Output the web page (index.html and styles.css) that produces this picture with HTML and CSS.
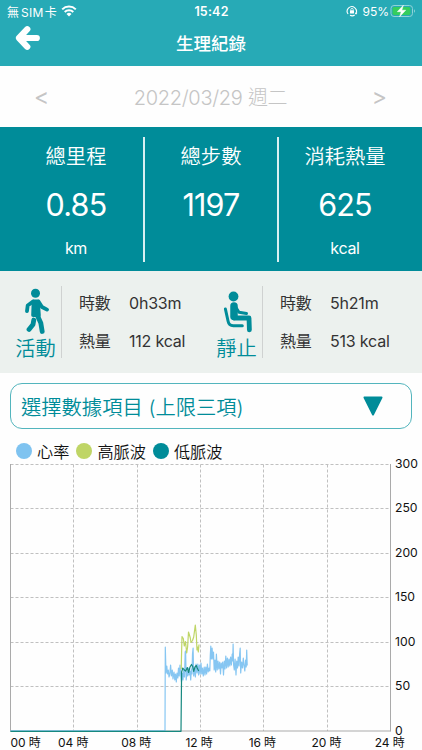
FILE: index.html
```html
<!DOCTYPE html>
<html lang="zh-Hant">
<head>
  <meta charset="UTF-8">
  <meta name="viewport" content="width=device-width, initial-scale=1.0">
  <title>生理紀錄</title>
  <link rel="stylesheet" href="styles.css">
</head>
<body>
  <header class="header">
    <div class="status-bar">
      <div class="status-left">
        <span class="carrier">無<span class="sim">SIM</span>卡</span>
        <svg class="wifi" width="16" height="12" viewBox="0 0 16 12">
          <path d="M1.2 4.4A9.7 9.7 0 0 1 14.8 4.4M3.7 7A6.2 6.2 0 0 1 12.3 7" fill="none" stroke="#fff" stroke-width="2"/>
          <path d="M5.5 8.9a3.6 3.6 0 0 1 5 0L8 11.4z" fill="#fff"/>
        </svg>
      </div>
      <div class="status-time">15:42</div>
      <div class="status-right">
        <svg width="12" height="12" viewBox="0 0 12 12">
          <path d="M2.1 9A4.6 4.6 0 1 1 9.6 8.9M4 10.3a4.6 4.6 0 0 0 4.7-.3" fill="none" stroke="#fff" stroke-width="1.1"/>
          <path d="M8.8 7.7h2.6L10 9.8z" fill="#fff"/>
          <rect x="4" y="5.3" width="4" height="3.1" rx=".5" fill="#fff"/>
          <path d="M4.8 5.5v-.9a1.2 1.2 0 0 1 2.4 0v.9" fill="none" stroke="#fff" stroke-width=".8"/>
        </svg>
        <span class="percent">95%</span>
        <svg width="26" height="14" viewBox="0 0 26 14">
          <rect x="1" y="1.5" width="21.5" height="11" rx="3" fill="none" stroke="#90d3d8"/>
          <rect x="2.6" y="3.1" width="17.7" height="7.8" rx="1.6" fill="#35cd5e"/>
          <path d="M24 5.2v3.6c1.3-.6 1.3-3 0-3.6z" fill="#90d3d8"/>
          <path d="M13.4 1.2L7.3 7.7h3.9L9.6 12.8l6.1-6.6h-3.9z" fill="#fff" stroke="#fff" stroke-width=".5"/>
        </svg>
      </div>
    </div>
    <div class="nav-bar">
      <svg class="back" width="26" height="26" viewBox="0 0 26 26">
        <path d="M12.3 4.2L4 13l8.3 8.8M5 13h16.8" fill="none" stroke="#fff" stroke-width="6.2" stroke-linecap="round" stroke-linejoin="round"/>
      </svg>
      <h1>生理紀錄</h1>
    </div>
  </header>

  <div class="date-bar">
    <span class="arrow">&lt;</span>
    <span class="date">2022/03/29 週二</span>
    <span class="arrow">&gt;</span>
  </div>

  <section class="summary">
    <div class="summary-item">
      <div class="label">總里程</div>
      <div class="value">0.85</div>
      <div class="unit">km</div>
    </div>
    <div class="summary-item">
      <div class="label">總步數</div>
      <div class="value">1197</div>
    </div>
    <div class="summary-item">
      <div class="label">消耗熱量</div>
      <div class="value">625</div>
      <div class="unit">kcal</div>
    </div>
  </section>

  <section class="activity">
    <div class="activity-item">
      <div class="activity-type">
        <svg width="26" height="48" viewBox="0 0 26 48">
          <g fill="none" stroke="#008c99" stroke-linecap="round" stroke-linejoin="round">
            <circle cx="12.5" cy="7.3" r="4.5" fill="#008c99" stroke="none"/>
            <path d="M10 15.5L4.7 19.5 4 25M15.5 15.5l3.5 5.5 5 2.6" stroke-width="3.8"/>
            <path d="M10.5 15.3h4.5l1 14H10z" fill="#008c99" stroke-width="3.6"/>
            <path d="M14.4 29.5l3.4 7.5 1.4 8.5M10.8 34L10 38.5 6 43.5" stroke-width="4.8"/>
          </g>
        </svg>
        <span>活動</span>
      </div>
      <div class="activity-data">
        <span>時數</span><span>0h33m</span>
        <span>熱量</span><span>112 kcal</span>
      </div>
    </div>
    <div class="activity-item">
      <div class="activity-type">
        <svg width="30" height="48" viewBox="0 0 30 48">
          <g fill="none" stroke="#008c99" stroke-linecap="round" stroke-linejoin="round">
            <circle cx="11.5" cy="10.5" r="4.9" fill="#008c99" stroke="none"/>
            <path d="M12 20v10.5" stroke-width="7.5"/>
            <path d="M12 32h15l.4 11.8" stroke-width="4.8"/>
            <path d="M13 20l4 6.2 7.5 1.3" stroke-width="3"/>
            <path d="M3.4 23l2.7 12.2q.9 4.5 5.2 4.5h9" stroke-width="3"/>
          </g>
        </svg>
        <span>靜止</span>
      </div>
      <div class="activity-data">
        <span>時數</span><span>5h21m</span>
        <span>熱量</span><span>513 kcal</span>
      </div>
    </div>
  </section>

  <div class="select-box">
    <span>選擇數據項目 (上限三項)</span>
    <svg width="20" height="20" viewBox="0 0 20 20">
      <path d="M1.5 1.5h17L10 18.5z" fill="#008c99" stroke="#008c99" stroke-width="2" stroke-linejoin="round"/>
    </svg>
  </div>

  <div class="legend">
    <span class="legend-item"><i class="dot heart"></i>心率</span>
    <span class="legend-item"><i class="dot high"></i>高脈波</span>
    <span class="legend-item"><i class="dot low"></i>低脈波</span>
  </div>

  <svg class="chart" width="422" height="287" viewBox="0 463 422 287">
    <g class="grid">
      <path d="M10.5 464.5H390.5M10.5 508.5H390.5M10.5 553.5H390.5M10.5 597.5H390.5M10.5 642.5H390.5M10.5 686.5H390.5"/>
      <path d="M73.5 464.5V731M137.5 464.5V731M200.5 464.5V731M263.5 464.5V731M327.5 464.5V731"/>
    </g>
    <path class="axis" d="M10.5 464V731.5M390.5 464V731.5M10.5 731H390.5"/>

    <!-- 心率 -->
    <polyline class="line heart-line" points="10.5,730.8 165,730.8 165.3,647 166,673 166.8,666 167.5,674 168.3,670 169,677 169.8,674 170.6,665 171.4,676 172.3,670 173,679 174,672 174.8,680 175.5,674 176.3,682 177,673 177.8,678 178.5,668 179.2,676 180,665 180.8,676 181.5,682 182.3,673 183,680 183.7,670 184.5,677 185.2,652 185.6,651 186.2,680 187,671 187.8,676 188.5,668 189.3,675 190,671 190.7,680 191.4,669 192,674 192.5,654 193.1,648 193.7,676 194.5,668 195.4,677 196,664 197,673 197.8,664 198.6,675 199.4,665 200.2,674 201,663 201.8,674 202.5,668 203.3,676 204.2,667 205,675 205.8,667 206.6,674 207.4,664 208.2,672 209,668 209.8,671 210.3,655 210.8,646 211.4,659 212.1,648 212.8,659 213.5,652 214.2,670 215,660 215.7,672 216.4,654 217.2,670 218,661 218.8,669 219.7,662 220.5,674 221.2,663 222,668 222.7,662 223.5,675 224.3,661 225,669 225.8,656 226.6,668 227.4,658 228.2,667 229,659 229.8,666 230.6,657 231.4,665 232.2,654 232.7,661 233.1,644 233.6,665 234.3,670 235.1,659 236,675 236.7,661 237.5,668 238.2,657 239,666 239.7,653 240.2,648 240.7,673 241.6,662 242.5,668 243.3,658 244,665 244.8,671 245.6,660 246.2,667 246.7,650 247.2,665 247.8,665"/>
    <!-- 高脈波 -->
    <polyline class="line high-line" points="181.2,669 181.6,652 182,636.5 183.3,638.5 184.3,646 185.5,641.5 186.7,653 187.6,647 188.5,632 190.2,637.5 191,642.5 192.5,640.5 193.7,637 195.3,625 196.3,635 197,650 197.8,647 198.3,652 199,644.5"/>
    <!-- 低脈波 -->
    <polyline class="line low-line" points="10.5,731.3 181,731.3 181.6,672 182.8,668 184.3,670 185.7,671 187.3,667.5 188.6,672.5 190,667 191.5,664.5 192.7,666.5 193.7,671.5 195,667 196.3,665.5 197.2,668 198.7,671"/>

    <g class="axis-label">
      <text x="395" y="468">300</text>
      <text x="395" y="512.4">250</text>
      <text x="395" y="556.8">200</text>
      <text x="395" y="601.3">150</text>
      <text x="395" y="645.7">100</text>
      <text x="395" y="690.1">50</text>
      <text x="395" y="734.5">0</text>
    </g>
    <g class="axis-label time-label">
      <text x="10.5" y="747">00 時</text>
      <text x="58" y="747">04 時</text>
      <text x="121.3" y="747">08 時</text>
      <text x="185.6" y="747">12 時</text>
      <text x="248.7" y="747">16 時</text>
      <text x="311.5" y="747">20 時</text>
      <text x="374.8" y="747">24 時</text>
    </g>
  </svg>
</body>
</html>
```
FILE: styles.css
```css
body {
  margin: 0;
  width: 422px;
  height: 750px;
  overflow: hidden;
  font-family: Inter, "Noto Sans CJK TC", sans-serif;
  background-color: #fefefe;
  color: #333;
}

.header {
  height: 66px;
  background-color: #27aab6;
  color: #fff;
}

.status-bar {
  display: grid;
  grid-template-columns: 1fr auto 1fr;
  align-items: center;
  height: 22px;
  padding: 0 6px 0 7px;
  font-size: 12px;
}

.status-left,
.status-right {
  display: flex;
  align-items: center;
}

.status-left {
  gap: 4px;
}

.status-right {
  justify-content: flex-end;
}

.sim {
  margin: 0 1px 0 2px;
  letter-spacing: 0.3px;
}

.status-time {
  font-size: 12.5px;
  font-weight: 600;
  letter-spacing: 0.2px;
}

.percent {
  margin: 0 1px 0 4px;
}

.nav-bar {
  display: grid;
  grid-template-columns: 50px 1fr 50px;
  height: 44px;
}

.back {
  margin: 3px 0 0 15px;
}

h1 {
  margin: 0;
  line-height: 43px;
  text-align: center;
  font-size: 17.5px;
  font-weight: 500;
}

.date-bar {
  display: flex;
  justify-content: space-between;
  align-items: center;
  height: 61px;
  padding: 0 35px 0 34px;
  color: #c5c5c5;
  font-size: 20px;
  font-weight: 300;
}

.date {
  letter-spacing: -0.3px;
}

.arrow {
  font-size: 23px;
  font-weight: 400;
}

.summary {
  display: grid;
  grid-template-columns: repeat(3, 1fr);
  height: 123px;
  padding: 10px 11px 11px 9px;
  background-color: #008c99;
  color: #fff;
  text-align: center;
}

.summary-item + .summary-item {
  border-left: 2px solid #d9eff1;
}

.summary .label {
  line-height: 39px;
  font-size: 20.3px;
  font-weight: 350;
}

.summary .value {
  line-height: 58px;
  font-size: 30.5px;
  font-weight: 400;
  letter-spacing: -0.8px;
}

.summary .unit {
  line-height: 28px;
  font-size: 16px;
  letter-spacing: -0.3px;
}

.activity {
  display: grid;
  grid-template-columns: 201px 201px;
  height: 102px;
  padding-left: 10px;
  background-color: #ecf1ee;
}

.activity-item {
  display: flex;
  align-items: flex-start;
  padding-top: 15px;
}

.activity-type {
  display: flex;
  flex-direction: column;
  align-items: center;
  width: 51px;
  height: 72px;
  border-right: 1px solid #cfd2d1;
  color: #008c99;
  font-size: 20.3px;
  font-weight: 350;
  line-height: 29px;
}

.activity-type svg {
  flex-shrink: 0;
}

.activity-data {
  display: grid;
  grid-template-columns: 50px auto;
  margin-top: -2px;
  padding-left: 17px;
  font-size: 16px;
  font-weight: 400;
  letter-spacing: -0.2px;
  line-height: 38px;
}

.select-box {
  display: flex;
  justify-content: space-between;
  align-items: center;
  box-sizing: border-box;
  height: 46px;
  margin: 10px 10px 0;
  padding: 0 28px 0 10px;
  border: 1.5px solid #53b5bd;
  border-radius: 12px;
  color: #008c99;
  font-size: 20.3px;
  font-weight: 350;
}

.legend {
  display: flex;
  gap: 7px;
  height: 24px;
  padding: 10px 0 0 16px;
  align-items: center;
  color: #111;
  font-size: 16.2px;
  font-weight: 350;
}

.legend-item {
  display: flex;
  align-items: center;
  gap: 5px;
}

.dot {
  width: 16px;
  height: 16px;
  border-radius: 50%;
}

.heart {
  background-color: #7fc3f0;
}

.high {
  background-color: #bfd566;
}

.low {
  background-color: #008c99;
}

.chart {
  display: block;
  overflow: visible;
}

.grid {
  fill: none;
  stroke: #c0c0c0;
  stroke-dasharray: 3 2;
}

.axis {
  fill: none;
  stroke: #aaa;
}

.line {
  fill: none;
  stroke-width: 1.2;
  stroke-linejoin: round;
}

.heart-line {
  stroke: #86c6f2;
}

.high-line {
  stroke: #bfd566;
}

.low-line {
  stroke: #16887f;
}

.axis-label {
  fill: #111;
  font-size: 12.2px;
}

.time-label {
  font-size: 12px;
  letter-spacing: -0.1px;
}
```
